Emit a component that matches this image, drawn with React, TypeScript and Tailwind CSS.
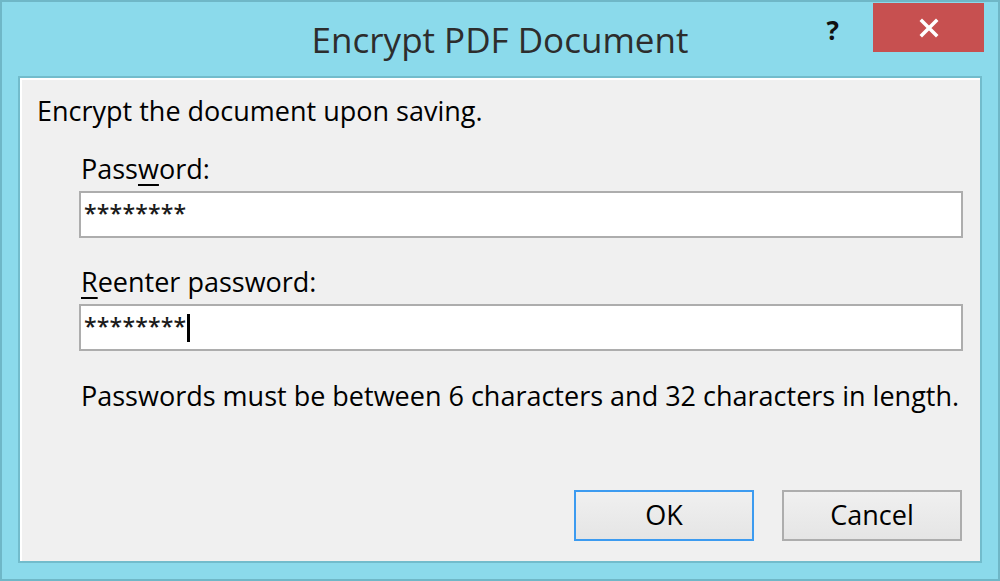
import React from "react";

// Windows 8 style "Encrypt PDF Document" dialog, shown at 225% scale

function Underlined({ children }: { children: React.ReactNode }) {
  return <span className="underline decoration-[2px] underline-offset-[5px]">{children}</span>;
}

function PasswordField({ value, caret }: { value: string; caret?: boolean }) {
  return (
    <div className="flex h-[47px] w-[884px] items-center border-2 border-[#adadad] bg-white pl-[3px]">
      <span className="pb-[3px] text-[23px] font-semibold leading-none tracking-[0.2px] text-[#1a1a1a]">{value}</span>
      {caret && <span className="ml-[1px] h-[28px] w-[3px] bg-black" />}
    </div>
  );
}

function DialogButton({ label, primary }: { label: string; primary?: boolean }) {
  return (
    <button
      type="button"
      className={`flex h-[51px] w-[180px] items-center justify-center border-2 bg-gradient-to-b from-[#f0f0f0] to-[#e5e5e5] text-[27px] text-black ${
        primary ? "border-[#3c9bf0]" : "border-[#adadad]"
      }`}
    >
      {label}
    </button>
  );
}

export default function App() {
  return (
    <div
      className="flex h-[581px] w-[1000px] flex-col border-2 border-[#6fb7c7] bg-[#8bdaeb] text-black"
      style={{ fontFamily: '"Open Sans", "Noto Sans", sans-serif' }}
    >
      {/* title bar */}
      <div className="relative flex h-[74px] shrink-0 items-center justify-center">
        <span className="text-[35px] leading-none text-[#2d2d2d]">Encrypt PDF Document</span>
        <div className="absolute right-[14px] top-[1px] flex items-start">
          <span className="mr-[34px] mt-[14px] text-[26px] font-bold leading-none text-[#111]">?</span>
          <div className="flex h-[49px] w-[111px] items-center justify-center bg-[#c75050]">
            <svg width="20" height="20" viewBox="0 0 20 20">
              <path d="M3 3 L17 17 M17 3 L3 17" stroke="white" strokeWidth="3.5" strokeLinecap="square" />
            </svg>
          </div>
        </div>
      </div>

      {/* content panel */}
      <div className="mx-[16px] mb-[16px] flex flex-1 flex-col border-[2px] border-[#72bccc] bg-[#f0f0f0]">
        <div className="flex flex-1 flex-col border-t-2 border-l-2 border-white pl-[15px] pt-[13px]">
          <div className="text-[27px] leading-[36px]">Encrypt the document upon saving.</div>

          <div className="ml-[42px] mt-[22px] flex flex-col">
            <div className="pl-[2px] text-[27px] leading-[36px]">
              Pass<Underlined>w</Underlined>ord:
            </div>
            <div className="mt-[4px]">
              <PasswordField value="********" />
            </div>

            <div className="mt-[26px] pl-[2px] text-[27px] leading-[36px]">
              <Underlined>R</Underlined>eenter password:
            </div>
            <div className="mt-[4px]">
              <PasswordField value="********" caret />
            </div>

            <div className="mt-[27px] pl-[2px] text-[27px] leading-[36px]">
              Passwords must be between 6 characters and 32 characters in length.
            </div>
          </div>

          <div className="mt-auto mb-[20px] mr-[18px] flex justify-end gap-[28px]">
            <DialogButton label="OK" primary />
            <DialogButton label="Cancel" />
          </div>
        </div>
      </div>
    </div>
  );
}
